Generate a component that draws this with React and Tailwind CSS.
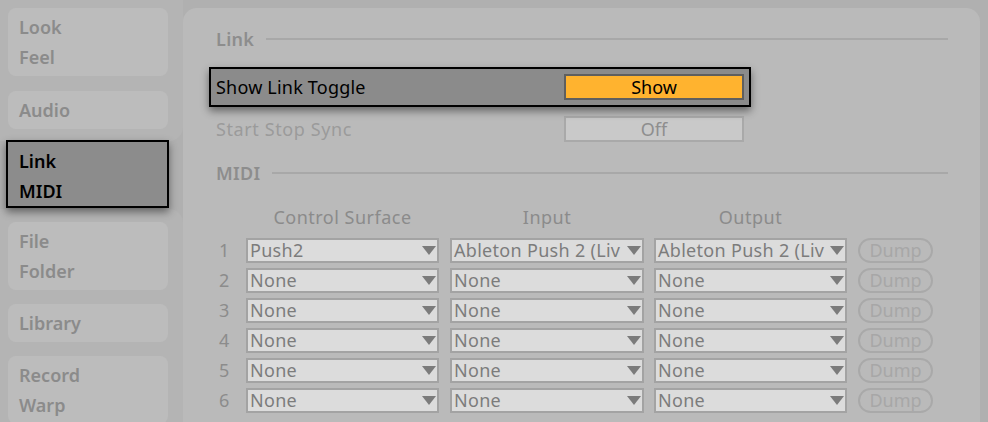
import React from 'react';

const SideCard = ({ items }) => (
    <div className="bg-[#bcbcbc] rounded-[8px] w-[160px] pt-[4px] pb-[4px] pl-[11px]">
        {items.map((t) => (
            <div key={t} className="leading-[30px] h-[30px] text-[18px] font-semibold text-[#8b8b8b]">{t}</div>
        ))}
    </div>
);

const Caret = () => (
    <svg width="14" height="9" viewBox="0 0 14 9" className="shrink-0 mr-[1px]">
        <path d="M0 0 H14 L7 9 Z" fill="#7b7b7b" />
    </svg>
);

const Dropdown = ({ value, width }) => (
    <div className={`h-[25px] border-2 border-[#a3a3a3] bg-[#dcdcdc] flex items-center pl-[2px] ${width}`}>
        <span className="flex-1 whitespace-nowrap text-[18px] leading-[21px] tracking-[0.3px] text-[#7c7c7c]">{value}</span>
        <Caret />
    </div>
);

const SectionHeader = ({ title }) => (
    <div className="flex items-center gap-[12px] h-[24px]">
        <span className="text-[18px] font-semibold tracking-[0.3px] text-[#8d8d8d]">{title}</span>
        <div className="flex-1 h-[2px] bg-[#a8a8a8]" />
    </div>
);

const rows = [
    ['1', 'Push2', 'Ableton Push 2 (Liv', 'Ableton Push 2 (Liv'],
    ['2', 'None', 'None', 'None'],
    ['3', 'None', 'None', 'None'],
    ['4', 'None', 'None', 'None'],
    ['5', 'None', 'None', 'None'],
    ['6', 'None', 'None', 'None'],
];

const App = () => {
    return (
        <div className="h-[422px] w-[988px] overflow-hidden bg-[#b0b0b0] flex font-['Noto_Sans',sans-serif]">
            {/* sidebar */}
            <aside className="w-[183px] shrink-0 flex flex-col">
                <div className="bg-[#b4b4b4] rounded-br-[14px] pt-[8px] pb-[12px] pl-[8px] flex flex-col gap-[15px]">
                    <SideCard items={['Look', 'Feel']} />
                    <SideCard items={['Audio']} />
                </div>
                <div className="relative z-10 -mt-[1px] ml-[6px] w-[163px] h-[71px] bg-[#8c8c8c] border-2 border-black pt-[4px] pl-[11px] shadow-[0_4px_8px_rgba(0,0,0,0.45)]">
                    <div className="leading-[30px] h-[30px] text-[18px] font-semibold text-black">Link</div>
                    <div className="leading-[30px] h-[30px] text-[18px] font-semibold text-black">MIDI</div>
                </div>
                <div className="mt-[1px] flex-1 bg-[#b4b4b4] rounded-tr-[14px] pt-[13px] pl-[8px] flex flex-col gap-[14px]">
                    <SideCard items={['File', 'Folder']} />
                    <SideCard items={['Library']} />
                    <SideCard items={['Record', 'Warp']} />
                </div>
            </aside>

            {/* main panel */}
            <main className="flex-1 mt-[8px] mr-[8px] bg-[#bababa] rounded-t-[14px] pl-[33px] pr-[32px] pt-[19px]">
                <SectionHeader title="Link" />

                <div className="relative z-10 mt-[16px] -ml-[7px] w-[542px] h-[40px] flex items-center justify-between border-2 border-black bg-[#8b8b8b] px-[5px] shadow-[0_4px_8px_rgba(0,0,0,0.45)]">
                    <span className="text-[18px] tracking-[0.2px] text-black">Show Link Toggle</span>
                    <div className="w-[180px] h-[26px] border-2 border-[#5f5f5f] bg-[#ffb32f] text-center text-[18px] leading-[22px] text-black">Show</div>
                </div>

                <div className="mt-[2px] -ml-[7px] w-[542px] h-[40px] flex items-center justify-between border-2 border-transparent px-[5px]">
                    <span className="text-[18px] tracking-[0.6px] text-[#9b9b9b]">Start Stop Sync</span>
                    <div className="w-[180px] h-[26px] border-2 border-[#a9a9a9] bg-[#c9c9c9] text-center text-[18px] leading-[22px] text-[#8e8e8e]">Off</div>
                </div>

                <div className="mt-[12px]">
                    <SectionHeader title="MIDI" />
                </div>

                <div className="mt-[20px] h-[24px] flex items-center text-[18px] tracking-[0.5px] text-[#8b8b8b]">
                    <div className="w-[30px]" />
                    <div className="w-[193px] text-center">Control Surface</div>
                    <div className="ml-[11px] w-[194px] text-center">Input</div>
                    <div className="ml-[10px] w-[193px] text-center">Output</div>
                </div>

                <div className="mt-[9px] flex flex-col gap-[5px]">
                    {rows.map(([n, cs, inp, out]) => (
                        <div key={n} className="flex items-center h-[25px]">
                            <div className="w-[30px] pl-[3px] text-[18px] text-[#8c8c8c]">{n}</div>
                            <Dropdown value={cs} width="w-[193px]" />
                            <div className="ml-[11px]"><Dropdown value={inp} width="w-[194px]" /></div>
                            <div className="ml-[10px]"><Dropdown value={out} width="w-[193px]" /></div>
                            <div className="ml-[11px] w-[75px] h-[25px] rounded-full border-2 border-[#a9a9a9] text-center text-[18px] leading-[21px] text-[#a7a7a7]">Dump</div>
                        </div>
                    ))}
                </div>
            </main>
        </div>
    );
};

export default App;
